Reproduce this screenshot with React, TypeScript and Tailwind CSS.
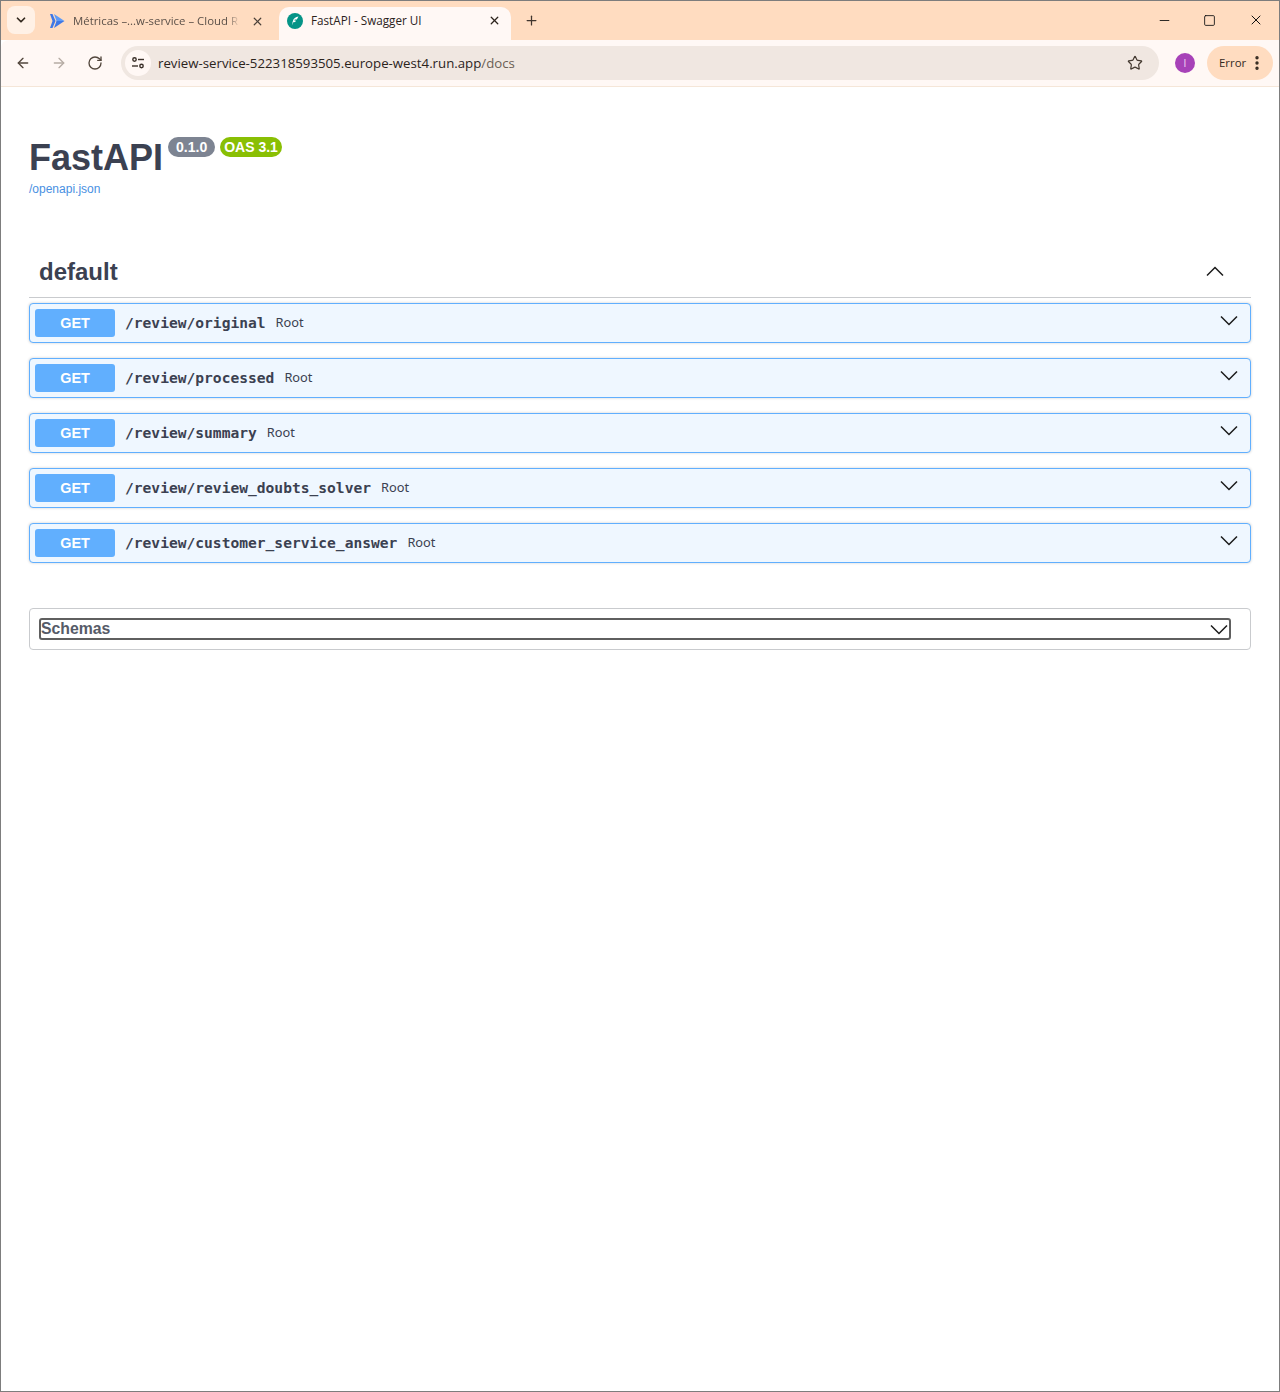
import React from 'react';
import {ChevronDown, ArrowLeft, ArrowRight, RotateCw, X, Plus, Star, Minus, Square, EllipsisVertical} from 'lucide-react';

const routes = [
    '/review/original',
    '/review/processed',
    '/review/summary',
    '/review/review_doubts_solver',
    '/review/customer_service_answer',
];

const uiFont = "font-['Open_Sans','Noto_Sans',sans-serif]";

function Chevron({up = false, className = ''}: {up?: boolean; className?: string}): JSX.Element {
    return (
        <svg width="20" height="12" viewBox="0 0 20 12" fill="none" stroke="#1a1a1a" strokeWidth="1.5" className={className}>
            <path d={up ? 'M2 10.5 L10 2.5 L18 10.5' : 'M2 1.5 L10 9.5 L18 1.5'} />
        </svg>
    );
}

function RouteRow({path}: {path: string}): JSX.Element {
    return (
        <div className="flex h-10 items-center rounded border border-[#61affe] bg-[#eff7ff] pl-[5px] pr-[11px] shadow-[0_0_3px_rgba(0,0,0,0.19)]">
            <div className="flex h-7 w-20 items-center justify-center rounded-[3px] bg-[#61affe] pt-px font-['Liberation_Sans',sans-serif] text-[14.4px] font-bold text-white">
                GET
            </div>
            <span className="ml-[10px] font-['DejaVu_Sans_Mono',monospace] text-[14.6px] font-bold text-[#3b4151]">{path}</span>
            <span className="ml-[10px] font-['Noto_Sans',sans-serif] text-[12.8px] text-[#3b4151]">Root</span>
            <Chevron className="ml-auto -translate-y-[2px]" />
        </div>
    );
}

function BrowserChrome(): JSX.Element {
    return (
        <div className={uiFont}>
            <div className="flex h-[39px] items-end bg-[#ffdcc0]">
                <div className="mb-[6px] ml-[6px] flex h-7 w-7 items-center justify-center rounded-lg bg-[#fff1e6]">
                    <ChevronDown size={14} strokeWidth={3} color="#33291f" />
                </div>
                <div className="mb-[5px] ml-[14px] flex h-7 w-[230px] items-center">
                    <svg width="16" height="16" viewBox="0 0 16 16" className="shrink-0">
                        <path d="M1 1 L3.5 1 L6.5 8 L3.5 15 L1 15 L3.5 8 Z" fill="#3f78e6" />
                        <path d="M5 1 L15.5 8 L7.5 8 Z" fill="#5d9bf8" />
                        <path d="M7.5 8 L15.5 8 L5 15 Z" fill="#3f78e6" />
                    </svg>
                    <span className="ml-[8px] w-[167px] overflow-hidden whitespace-nowrap text-[11.4px] text-[#5b5048] [mask-image:linear-gradient(to_right,black_92%,transparent)]">
                        Métricas –...w-service – Cloud R
                    </span>
                    <X size={13} strokeWidth={2.2} color="#4a4038" className="ml-[11px] shrink-0" />
                </div>
                <div className="flex h-[33px] w-[232px] items-center rounded-t-[10px] bg-[#fff8f5] pb-[6px] pl-[8px] pr-[10px]">
                    <div className="flex h-4 w-4 shrink-0 items-center justify-center rounded-full bg-[#059487]">
                        <svg width="12" height="12" viewBox="0 0 12 12">
                            <path d="M9.5 1.5 C6.5 1.8 4.5 3.5 3.8 6.2 L2.8 10.5 L4.3 7.2 L6.3 7 L6.8 5.6 L5.3 5.6 L5.8 4.6 L7.8 4.4 Z" fill="#ffffff" />
                        </svg>
                    </div>
                    <span className="ml-2 whitespace-nowrap text-[11.7px] text-[#2b231c]">FastAPI - Swagger UI</span>
                    <X size={13} strokeWidth={2.4} color="#2b231c" className="ml-auto" />
                </div>
                <Plus size={15} strokeWidth={2} color="#40362e" className="mb-[12px] ml-[13px]" />
                <div className="mb-[12px] ml-auto flex items-center">
                    <Minus size={15} strokeWidth={1.4} color="#111111" className="mr-[31px]" />
                    <Square size={13} strokeWidth={1.6} color="#111111" className="mr-[32px]" />
                    <X size={16} strokeWidth={1.5} color="#111111" className="mr-[15px]" />
                </div>
            </div>
            <div className="flex h-[47px] items-center rounded-tl-lg border-b border-[#f5e6d8] bg-[#fff8f5]">
                <ArrowLeft size={16} strokeWidth={2} color="#52463c" className="ml-[14px]" />
                <ArrowRight size={16} strokeWidth={2} color="#b6aca4" className="ml-[20px]" />
                <RotateCw size={16} strokeWidth={2} color="#52463c" className="ml-[20px]" />
                <div className="ml-[18px] flex h-[34px] w-[1038px] items-center rounded-full bg-[#f0e7e1] pl-[4px] pr-[16px]">
                    <div className="flex h-[26px] w-[26px] items-center justify-center rounded-full bg-[#fff8f5]">
                        <svg width="16" height="16" viewBox="0 0 16 16" fill="none" stroke="#3a3029" strokeWidth="1.4">
                            <circle cx="4.5" cy="4.5" r="1.7" />
                            <path d="M8 4.5 H14" />
                            <path d="M2 11 H8" />
                            <circle cx="11.5" cy="11" r="1.7" />
                        </svg>
                    </div>
                    <span className="ml-[7px] translate-y-px text-[13.24px] text-[#2b231c]">
                        review-service-522318593505.europe-west4.run.app<span className="text-[#6b5f55]">/docs</span>
                    </span>
                    <Star size={16} strokeWidth={1.8} color="#43382f" className="ml-auto" />
                </div>
                <div className="ml-[16px] flex h-5 w-5 items-center justify-center rounded-full bg-[#a742b8] text-[10px] text-[#f3dcf6]">I</div>
                <div className="ml-[12px] flex h-[34px] w-[66px] items-center rounded-full bg-[#ffdcc0] pl-3">
                    <span className="text-[11.4px] text-[#33291f]">Error</span>
                    <EllipsisVertical size={18} strokeWidth={2.5} color="#33291f" className="ml-[2px]" />
                </div>
            </div>
        </div>
    );
}

export default function App(): JSX.Element {
    return (
        <div className="h-[1392px] w-[1280px] overflow-hidden border border-[#7d7d7d] bg-white">
            <BrowserChrome />
            <main className="px-[28px] font-['Liberation_Sans',sans-serif]">
                <div className="mt-[47px] flex items-start">
                    <h1 className="text-4xl leading-[48px] font-bold text-[#3b4151]">FastAPI</h1>
                    <span className="ml-[5px] mt-[3px] flex h-5 items-center rounded-full bg-[#7d8492] px-2 text-sm font-bold text-white">0.1.0</span>
                    <span className="ml-[5px] mt-[3px] flex h-5 items-center rounded-full bg-[#89bf04] px-1 text-sm font-bold text-white">OAS 3.1</span>
                </div>
                <a className="-mt-px block text-xs text-[#4990e2]">/openapi.json</a>

                <div className="mt-[49px] flex h-[52px] items-center border-b border-[#c9cbce] pl-[10px] pr-[26px]">
                    <h2 className="text-2xl font-bold text-[#3b4151]">default</h2>
                    <Chevron up className="ml-auto -translate-y-px" />
                </div>

                <div className="mt-[5px] flex flex-col gap-[15px]">
                    {routes.map(path => <RouteRow key={path} path={path} />)}
                </div>

                <div className="mt-[45px] flex h-[42px] items-center rounded border border-[#c9cbce] pl-[9px] pr-[19px]">
                    <div className="flex h-[22px] w-full items-center rounded-[3px] border-2 border-[#5f5f5f]">
                        <span className="text-[15.8px] font-bold text-[#565b68]">Schemas</span>
                        <Chevron className="ml-auto translate-y-[1px]" />
                    </div>
                </div>
            </main>
        </div>
    );
}
